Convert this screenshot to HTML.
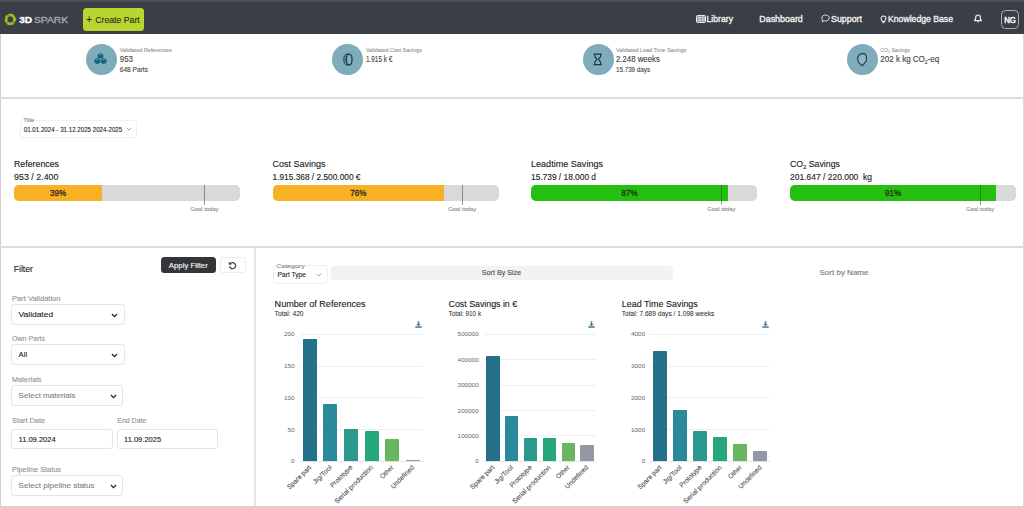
<!DOCTYPE html>
<html lang="en"><head><meta charset="utf-8"><title>3D Spark Dashboard</title>
<style>
html,body{margin:0;padding:0;}
body{width:1024px;height:507px;position:relative;overflow:hidden;background:#fff;font-family:"Liberation Sans", sans-serif;}
body>div,body>svg{position:absolute;box-sizing:border-box;}
svg.tx text{font-family:"Liberation Sans", sans-serif;white-space:pre;stroke-linejoin:round;}
</style></head><body>
<div style="left:0px;top:0px;width:1024px;height:507px;background:#fff;"></div>
<div style="left:0px;top:34px;width:1px;height:473px;background:#cfcfcf;"></div>
<div style="left:1023px;top:34px;width:1px;height:473px;background:#d8d8d8;"></div>
<div style="left:0px;top:97.2px;width:1024px;height:1.9px;background:#dcdcdc;"></div>
<div style="left:0px;top:246.4px;width:1024px;height:2px;background:#dcdcdc;"></div>
<div style="left:254.1px;top:248px;width:2.1px;height:259px;background:#e4e4e4;"></div>
<div style="left:0px;top:505.7px;width:1024px;height:1.3px;background:#d2d2d2;"></div>
<div style="left:0px;top:0px;width:1024px;height:34.4px;background:#3a3f47;"></div>
<div style="left:0px;top:0px;width:1024px;height:2px;background:#4d4d4f;"></div>
<svg style="left:3.1px;top:11.9px" width="15" height="15" viewBox="0 0 15 15">
<path d="M7.2 1.4 L10.6 2.2 L13.6 7.6 L10.4 12.8 L5 13.6 L1.5 9.4 L2.6 3.6 Z" fill="none" stroke="#9fba24" stroke-width="3.5" stroke-linejoin="round" transform="translate(1.8 1.8) scale(0.75)"/>
<path d="M4.2 2.2 L6 4.6 M11.4 10.6 L9.4 9.4 M3 11.4 L4.8 9.4" stroke="#3a3f47" stroke-width="0.7"/>
</svg>
<div style="left:83px;top:8px;width:61px;height:23px;background:#b9d532;border-radius:3.5px;"></div>
<svg style="left:696px;top:15px" width="10" height="8" viewBox="0 0 10 8"><rect x="0.5" y="0.5" width="9" height="7" rx="1" fill="rgba(255,255,255,0.45)" stroke="#eee" stroke-width="1"/><path d="M2 2.5h3M2 4h3M2 5.5h3M6.2 2.3h2v3.4h-2z" stroke="#eee" stroke-width="0.7" fill="none"/></svg>
<svg style="left:821px;top:14px" width="9" height="9" viewBox="0 0 9 9"><path d="M4.5 1 C6.6 1 8.2 2.3 8.2 4 C8.2 5.7 6.6 7 4.5 7 C4 7 3.6 6.9 3.2 6.8 L1.2 7.8 L1.7 6.1 C1.1 5.5 0.8 4.8 0.8 4 C0.8 2.3 2.4 1 4.5 1Z" fill="none" stroke="#eee" stroke-width="0.9"/></svg>
<svg style="left:879.6px;top:14.6px" width="7" height="9.4" viewBox="0 0 8 10"><path d="M4 0.8 C5.8 0.8 6.8 2.1 6.8 3.5 C6.8 4.7 6 5.3 5.6 6.2 L5.4 7 H2.6 L2.4 6.2 C2 5.3 1.2 4.7 1.2 3.5 C1.2 2.1 2.2 0.8 4 0.8Z M2.9 8.4h2.2" fill="none" stroke="#f2f2f2" stroke-width="1.15"/></svg>
<svg style="left:974px;top:14px" width="8" height="10" viewBox="0 0 8 10"><path d="M4 1 C5.7 1 6.3 2.3 6.3 3.6 C6.3 5.3 7 6 7.3 6.6 H0.7 C1 6 1.7 5.3 1.7 3.6 C1.7 2.3 2.3 1 4 1Z" fill="none" stroke="#f2f2f2" stroke-width="1.2"/><path d="M3 7.5 a1 1 0 0 0 2 0Z" fill="#f2f2f2"/></svg>
<div style="left:1000.9px;top:10.2px;width:18.3px;height:18.7px;background:transparent;border:1px solid #aab0b6;border-radius:4.5px;"></div>
<div style="left:86.3px;top:44.1px;width:30.8px;height:30.8px;background:#7eacba;border-radius:50%;"></div>
<div style="left:332.3px;top:44.1px;width:30.8px;height:30.8px;background:#7eacba;border-radius:50%;"></div>
<div style="left:582.8000000000001px;top:44.1px;width:30.8px;height:30.8px;background:#7eacba;border-radius:50%;"></div>
<div style="left:846.8000000000001px;top:44.1px;width:30.8px;height:30.8px;background:#7eacba;border-radius:50%;"></div>
<svg style="left:94px;top:52.8px" width="13" height="11.6" viewBox="0 0 28 25"><g fill="#11627e">
<path d="M14 0 L20 3 V9.5 L14 12.5 L8 9.5 V3Z"/><path d="M7.2 11 L13.2 14 V21 L7.2 24 L1 21 V14Z"/><path d="M20.8 11 L27 14 V21 L20.8 24 L14.8 21 V14Z"/></g>
<g fill="#5fa2b6"><path d="M10.5 3.6 L14 2 L17.5 3.6 L14 5.2Z"/><path d="M3.6 14.6 L7.2 13 L10.6 14.6 L7.2 16.2Z"/><path d="M17.3 14.6 L20.8 13 L24.4 14.6 L20.8 16.2Z"/></g></svg>
<svg style="left:342.8px;top:52.8px" width="10" height="13" viewBox="0 0 10 13"><g fill="none" stroke="#1d3b47" stroke-width="1"><ellipse cx="6.2" cy="6.5" rx="2.8" ry="5.4" stroke-width="1.25" fill="#86b2bf"/><path d="M6.2 1 H3.8 C2 1 0.8 3.4 0.8 6.5 C0.8 9.6 2 12 3.8 12 H6.2" /><path d="M1.4 4.2 H3.4 M0.9 6.5 H3.2 M1.4 8.8 H3.4" stroke-width="0.7"/></g></svg>
<svg style="left:593.2px;top:53.2px" width="9.4" height="12.6" viewBox="0 0 10 13"><g fill="none" stroke="#203844" stroke-width="1.3"><path d="M0.6 0.9 H9.4 M0.6 12.1 H9.4"/><path d="M1.8 0.9 V2.6 C1.8 4.8 4.1 5.6 4.1 6.5 C4.1 7.4 1.8 8.2 1.8 10.4 V12.1 M8.2 0.9 V2.6 C8.2 4.8 5.9 5.6 5.9 6.5 C5.9 7.4 8.2 8.2 8.2 10.4 V12.1"/></g></svg>
<svg style="left:856.5px;top:52.8px" width="10.4" height="13" viewBox="0 0 10.4 13"><path d="M2.1 1.9 L3.6 0.9 L5.3 0.5 L6.6 0.9 L7.9 0.7 L8.7 2.2 L9.5 3.8 L9.3 5.2 L9.7 6.9 L8.8 8.6 L7.3 10.4 L6.5 11.8 L5.3 12.4 L4 11.9 L3.2 10.9 L1.8 9.6 L0.9 7.9 L0.9 6.2 L0.4 4.5 L1.4 3.4Z" fill="#8db6c3" stroke="#1f3b47" stroke-width="1.15" stroke-linejoin="round"/></svg>
<div style="left:19.8px;top:119.5px;width:117.5px;height:18.2px;background:#fff;border:1px solid #f0f0f2;border-radius:3px;"></div>
<div style="left:22.5px;top:117px;width:13px;height:5px;background:#fff;"></div>
<svg style="left:126.2px;top:127.4px" width="6" height="4" viewBox="0 0 6 4"><path d="M0.8 0.8 L3 3 L5.2 0.8" fill="none" stroke="#8a8a8a" stroke-width="0.8"/></svg>
<div style="left:14px;top:184.5px;width:226px;height:16.4px;background:#d9d9d9;border-radius:5px;overflow:hidden;"></div>
<div style="left:14px;top:184.5px;width:88px;height:16.4px;background:#f8b024;border-radius:5px 0 0 5px;"></div>
<div style="left:203.95000000000002px;top:184.5px;width:0.9px;height:20.5px;background:rgba(60,60,60,0.5);"></div>
<div style="left:272.5px;top:184.5px;width:226px;height:16.4px;background:#d9d9d9;border-radius:5px;overflow:hidden;"></div>
<div style="left:272.5px;top:184.5px;width:171.5px;height:16.4px;background:#f8b024;border-radius:5px 0 0 5px;"></div>
<div style="left:461.55px;top:184.5px;width:0.9px;height:20.5px;background:rgba(60,60,60,0.5);"></div>
<div style="left:531px;top:184.5px;width:226px;height:16.4px;background:#d9d9d9;border-radius:5px;overflow:hidden;"></div>
<div style="left:531px;top:184.5px;width:197px;height:16.4px;background:#23c010;border-radius:5px 0 0 5px;"></div>
<div style="left:720.9499999999999px;top:184.5px;width:0.9px;height:20.5px;background:rgba(60,60,60,0.5);"></div>
<div style="left:790px;top:184.5px;width:226px;height:16.4px;background:#d9d9d9;border-radius:5px;overflow:hidden;"></div>
<div style="left:790px;top:184.5px;width:206px;height:16.4px;background:#23c010;border-radius:5px 0 0 5px;"></div>
<div style="left:979.55px;top:184.5px;width:0.9px;height:20.5px;background:rgba(60,60,60,0.5);"></div>
<div style="left:161px;top:257px;width:55.2px;height:16.3px;background:#333539;border-radius:3.5px;"></div>
<div style="left:220.3px;top:257px;width:25.4px;height:16.3px;background:#fff;border:1px solid #ececef;border-radius:3px;"></div>
<svg style="left:227.6px;top:260.6px" width="9" height="9" viewBox="0 0 9 9"><path d="M2.2 2.6 A3.1 3.1 0 1 1 1.5 5.2" fill="none" stroke="#3c3c3c" stroke-width="1.2"/><path d="M0.6 0.8 L1 4 L4 3.3Z" fill="#3c3c3c"/></svg>
<div style="left:11.4px;top:304.0px;width:113.5px;height:20.5px;background:#fff;border:1px solid #e4e5e9;border-radius:3px;"></div>
<svg style="left:111.4px;top:312.59999999999997px" width="7" height="5" viewBox="0 0 7 5"><path d="M0.9 1 L3.5 3.6 L6.1 1" fill="none" stroke="#222" stroke-width="1.15"/></svg>
<div style="left:11.4px;top:344.2px;width:113.5px;height:20.5px;background:#fff;border:1px solid #e4e5e9;border-radius:3px;"></div>
<svg style="left:111.4px;top:352.79999999999995px" width="7" height="5" viewBox="0 0 7 5"><path d="M0.9 1 L3.5 3.6 L6.1 1" fill="none" stroke="#222" stroke-width="1.15"/></svg>
<div style="left:11.4px;top:385.1px;width:112px;height:20.5px;background:#fff;border:1px solid #e4e5e9;border-radius:3px;"></div>
<svg style="left:109.9px;top:393.7px" width="7" height="5" viewBox="0 0 7 5"><path d="M0.9 1 L3.5 3.6 L6.1 1" fill="none" stroke="#222" stroke-width="1.15"/></svg>
<div style="left:11.4px;top:429.3px;width:101.6px;height:20.2px;background:#fff;border:1px solid #e4e5e9;border-radius:3px;"></div>
<div style="left:116.8px;top:429.3px;width:101.2px;height:20.2px;background:#fff;border:1px solid #e4e5e9;border-radius:3px;"></div>
<div style="left:11.4px;top:475.0px;width:112px;height:20.5px;background:#fff;border:1px solid #e4e5e9;border-radius:3px;"></div>
<svg style="left:109.9px;top:483.59999999999997px" width="7" height="5" viewBox="0 0 7 5"><path d="M0.9 1 L3.5 3.6 L6.1 1" fill="none" stroke="#222" stroke-width="1.15"/></svg>
<div style="left:272.8px;top:264.6px;width:54.8px;height:19px;background:#fff;border:1px solid #f0f0f2;border-radius:3px;"></div>
<div style="left:275px;top:262px;width:30px;height:6px;background:#fff;"></div>
<svg style="left:315.8px;top:272.6px" width="6" height="4" viewBox="0 0 6 4"><path d="M0.8 0.8 L3 3 L5.2 0.8" fill="none" stroke="#999" stroke-width="0.8"/></svg>
<div style="left:331px;top:265.6px;width:342px;height:14.6px;background:#f1f2f3;border-radius:4px;"></div>
<svg style="left:415.1px;top:320.5px" width="7" height="7" viewBox="0 0 7 7"><path d="M2.7 0.3h1.6v2.6h1.5L3.5 5.2 1.2 2.9h1.5z" fill="#4c7f93"/><path d="M0.3 5.2h6.4v1.6H0.3z" fill="#4c7f93"/></svg>
<div style="left:300px;top:460.75px;width:123px;height:0.6px;background:#e4e4e4;"></div>
<div style="left:300px;top:429.0px;width:123px;height:0.6px;background:#efefef;"></div>
<div style="left:300px;top:397.25px;width:123px;height:0.6px;background:#efefef;"></div>
<div style="left:300px;top:365.5px;width:123px;height:0.6px;background:#efefef;"></div>
<div style="left:300px;top:333.75px;width:123px;height:0.6px;background:#efefef;"></div>
<div style="left:302.8px;top:338.6px;width:14.1px;height:122.39999999999998px;background:#26718a;border-radius:0.8px 0.8px 0 0;"></div>
<div style="left:323.40000000000003px;top:404px;width:14.1px;height:57px;background:#2a8a9b;border-radius:0.8px 0.8px 0 0;"></div>
<div style="left:344.0px;top:429px;width:14.1px;height:32px;background:#2a9a8f;border-radius:0.8px 0.8px 0 0;"></div>
<div style="left:364.6px;top:431px;width:14.1px;height:30px;background:#26a67b;border-radius:0.8px 0.8px 0 0;"></div>
<div style="left:385.20000000000005px;top:438.8px;width:14.1px;height:22.19999999999999px;background:#68b65f;border-radius:0.8px 0.8px 0 0;"></div>
<div style="left:405.8px;top:460.2px;width:14.1px;height:0.8000000000000114px;background:#9298a4;border-radius:0.8px 0.8px 0 0;"></div>
<svg style="left:587.5px;top:320.5px" width="7" height="7" viewBox="0 0 7 7"><path d="M2.7 0.3h1.6v2.6h1.5L3.5 5.2 1.2 2.9h1.5z" fill="#4c7f93"/><path d="M0.3 5.2h6.4v1.6H0.3z" fill="#4c7f93"/></svg>
<div style="left:483.7px;top:460.75px;width:112.80000000000001px;height:0.6px;background:#e4e4e4;"></div>
<div style="left:483.7px;top:435.35px;width:112.80000000000001px;height:0.6px;background:#efefef;"></div>
<div style="left:483.7px;top:409.95px;width:112.80000000000001px;height:0.6px;background:#efefef;"></div>
<div style="left:483.7px;top:384.55px;width:112.80000000000001px;height:0.6px;background:#efefef;"></div>
<div style="left:483.7px;top:359.15px;width:112.80000000000001px;height:0.6px;background:#efefef;"></div>
<div style="left:483.7px;top:333.75px;width:112.80000000000001px;height:0.6px;background:#efefef;"></div>
<div style="left:486.3px;top:356.1px;width:13.3px;height:104.89999999999998px;background:#26718a;border-radius:0.8px 0.8px 0 0;"></div>
<div style="left:505.1px;top:416.2px;width:13.3px;height:44.80000000000001px;background:#2a8a9b;border-radius:0.8px 0.8px 0 0;"></div>
<div style="left:523.9px;top:438px;width:13.3px;height:23px;background:#2a9a8f;border-radius:0.8px 0.8px 0 0;"></div>
<div style="left:542.7px;top:438.3px;width:13.3px;height:22.69999999999999px;background:#26a67b;border-radius:0.8px 0.8px 0 0;"></div>
<div style="left:561.5px;top:442.8px;width:13.3px;height:18.19999999999999px;background:#68b65f;border-radius:0.8px 0.8px 0 0;"></div>
<div style="left:580.3px;top:444.6px;width:13.3px;height:16.399999999999977px;background:#9298a4;border-radius:0.8px 0.8px 0 0;"></div>
<svg style="left:762.1px;top:320.5px" width="7" height="7" viewBox="0 0 7 7"><path d="M2.7 0.3h1.6v2.6h1.5L3.5 5.2 1.2 2.9h1.5z" fill="#4c7f93"/><path d="M0.3 5.2h6.4v1.6H0.3z" fill="#4c7f93"/></svg>
<div style="left:650px;top:460.75px;width:120px;height:0.6px;background:#e4e4e4;"></div>
<div style="left:650px;top:429.0px;width:120px;height:0.6px;background:#efefef;"></div>
<div style="left:650px;top:397.25px;width:120px;height:0.6px;background:#efefef;"></div>
<div style="left:650px;top:365.5px;width:120px;height:0.6px;background:#efefef;"></div>
<div style="left:650px;top:333.75px;width:120px;height:0.6px;background:#efefef;"></div>
<div style="left:653.4px;top:351.3px;width:14px;height:109.69999999999999px;background:#26718a;border-radius:0.8px 0.8px 0 0;"></div>
<div style="left:673.4px;top:410.4px;width:14px;height:50.60000000000002px;background:#2a8a9b;border-radius:0.8px 0.8px 0 0;"></div>
<div style="left:693.4px;top:431px;width:14px;height:30px;background:#2a9a8f;border-radius:0.8px 0.8px 0 0;"></div>
<div style="left:713.4px;top:436.5px;width:14px;height:24.5px;background:#26a67b;border-radius:0.8px 0.8px 0 0;"></div>
<div style="left:733.4px;top:443.5px;width:14px;height:17.5px;background:#68b65f;border-radius:0.8px 0.8px 0 0;"></div>
<div style="left:753.4px;top:451px;width:14px;height:10px;background:#9298a4;border-radius:0.8px 0.8px 0 0;"></div>
<svg class="tx" style="left:0;top:0" width="1024" height="507" viewBox="0 0 1024 507">
<text font-size="9.3" fill="#fff" stroke="#fff" stroke-width="0.300" font-weight="700" textLength="13" lengthAdjust="spacingAndGlyphs" x="19.20" y="23.05">3D</text>
<text font-size="9.3" fill="#a4a9af" stroke="#a4a9af" stroke-width="0.350" textLength="34.2" lengthAdjust="spacingAndGlyphs" x="33.90" y="23.05">SPARK</text>
<text font-size="10.5" fill="#262b1a" stroke="#262b1a" stroke-width="0.147" textLength="5.8" lengthAdjust="spacingAndGlyphs" x="86.30" y="23.08">+</text>
<text font-size="8.6" fill="#262b1a" stroke="#262b1a" stroke-width="0.120" textLength="44.4" lengthAdjust="spacingAndGlyphs" x="95.30" y="22.60">Create Part</text>
<text font-size="8.8" fill="#f4f4f4" stroke="#f4f4f4" stroke-width="0.320" textLength="26.5" lengthAdjust="spacingAndGlyphs" x="706.50" y="22.27">Library</text>
<text font-size="8.8" fill="#f4f4f4" stroke="#f4f4f4" stroke-width="0.320" textLength="43.5" lengthAdjust="spacingAndGlyphs" x="759.30" y="22.27">Dashboard</text>
<text font-size="8.8" fill="#f4f4f4" stroke="#f4f4f4" stroke-width="0.320" textLength="31" lengthAdjust="spacingAndGlyphs" x="831.00" y="22.27">Support</text>
<text font-size="8.8" fill="#f4f4f4" stroke="#f4f4f4" stroke-width="0.320" textLength="65" lengthAdjust="spacingAndGlyphs" x="888.00" y="22.27">Knowledge Base</text>
<text font-size="8.8" fill="#fff" stroke="#fff" stroke-width="0.450" textLength="11.8" lengthAdjust="spacingAndGlyphs" text-anchor="middle" x="1010.10" y="22.67">NG</text>
<text font-size="4.9" fill="#8d8d8d" stroke="#8d8d8d" stroke-width="0.069" textLength="52" lengthAdjust="spacingAndGlyphs" x="119.80" y="51.96">Validated References</text>
<text font-size="8.3" fill="#404040" stroke="#404040" stroke-width="0.116" textLength="13" lengthAdjust="spacingAndGlyphs" x="119.80" y="62.39">953</text>
<text font-size="6.3" fill="#404040" stroke="#404040" stroke-width="0.088" textLength="28.2" lengthAdjust="spacingAndGlyphs" x="119.80" y="71.67">648 Parts</text>
<text font-size="4.9" fill="#8d8d8d" stroke="#8d8d8d" stroke-width="0.069" textLength="56" lengthAdjust="spacingAndGlyphs" x="366.00" y="51.96">Validated Cost Savings</text>
<text font-size="8.3" fill="#404040" stroke="#404040" stroke-width="0.116" textLength="26.2" lengthAdjust="spacingAndGlyphs" x="366.00" y="62.39">1.915 k €</text>
<text font-size="4.9" fill="#8d8d8d" stroke="#8d8d8d" stroke-width="0.069" textLength="70.3" lengthAdjust="spacingAndGlyphs" x="616.00" y="51.96">Validated Lead Time Savings</text>
<text font-size="8.3" fill="#404040" stroke="#404040" stroke-width="0.116" textLength="43.8" lengthAdjust="spacingAndGlyphs" x="616.00" y="62.39">2.248 weeks</text>
<text font-size="6.3" fill="#404040" stroke="#404040" stroke-width="0.088" textLength="34" lengthAdjust="spacingAndGlyphs" x="616.00" y="71.67">15.739 days</text>
<text font-size="4.9" fill="#8d8d8d" stroke="#8d8d8d" stroke-width="0.069" textLength="29.7" lengthAdjust="spacingAndGlyphs" x="880.30" y="51.96">CO<tspan dy="1.08" font-size="3.04">2</tspan><tspan dy="-1.08">&#8203;</tspan> Savings</text>
<text font-size="8.3" fill="#404040" stroke="#404040" stroke-width="0.116" textLength="58.9" lengthAdjust="spacingAndGlyphs" x="880.30" y="62.39">202 k kg CO<tspan dy="1.83" font-size="5.15">2</tspan><tspan dy="-1.83">&#8203;</tspan>-eq</text>
<text font-size="5.8" fill="#7a8390" stroke="#7a8390" stroke-width="0.081" textLength="11.2" lengthAdjust="spacingAndGlyphs" x="23.30" y="122.39">Title</text>
<text font-size="6.8" fill="#222" stroke="#222" stroke-width="0.095" textLength="98.4" lengthAdjust="spacingAndGlyphs" x="23.80" y="132.05">01.01.2024 - 31.12.2025 2024-2025</text>
<text font-size="9" fill="#222" stroke="#222" stroke-width="0.126" textLength="45" lengthAdjust="spacingAndGlyphs" x="14.00" y="167.04">References</text>
<text font-size="8.4" fill="#222" stroke="#222" stroke-width="0.118" textLength="44.5" lengthAdjust="spacingAndGlyphs" x="14.00" y="180.32">953 / 2.400</text>
<text font-size="8.2" fill="#2a2a1a" stroke="#2a2a1a" stroke-width="0.280" textLength="16" lengthAdjust="spacingAndGlyphs" text-anchor="middle" x="58.00" y="195.65">39%</text>
<text font-size="5.2" fill="#8a8a8a" stroke="#8a8a8a" stroke-width="0.073" textLength="28.2" lengthAdjust="spacingAndGlyphs" text-anchor="middle" x="204.40" y="211.07">Goal today</text>
<text font-size="9" fill="#222" stroke="#222" stroke-width="0.126" textLength="53" lengthAdjust="spacingAndGlyphs" x="272.50" y="167.04">Cost Savings</text>
<text font-size="8.4" fill="#222" stroke="#222" stroke-width="0.118" textLength="88" lengthAdjust="spacingAndGlyphs" x="272.50" y="180.32">1.915.368 / 2.500.000 €</text>
<text font-size="8.2" fill="#2a2a1a" stroke="#2a2a1a" stroke-width="0.280" textLength="16" lengthAdjust="spacingAndGlyphs" text-anchor="middle" x="358.25" y="195.65">76%</text>
<text font-size="5.2" fill="#8a8a8a" stroke="#8a8a8a" stroke-width="0.073" textLength="28.2" lengthAdjust="spacingAndGlyphs" text-anchor="middle" x="462.00" y="211.07">Goal today</text>
<text font-size="9" fill="#222" stroke="#222" stroke-width="0.126" textLength="72" lengthAdjust="spacingAndGlyphs" x="531.00" y="167.04">Leadtime Savings</text>
<text font-size="8.4" fill="#222" stroke="#222" stroke-width="0.118" textLength="65" lengthAdjust="spacingAndGlyphs" x="531.00" y="180.32">15.739 / 18.000 d</text>
<text font-size="8.2" fill="#2a2a1a" stroke="#2a2a1a" stroke-width="0.280" textLength="16" lengthAdjust="spacingAndGlyphs" text-anchor="middle" x="629.50" y="195.65">87%</text>
<text font-size="5.2" fill="#8a8a8a" stroke="#8a8a8a" stroke-width="0.073" textLength="28.2" lengthAdjust="spacingAndGlyphs" text-anchor="middle" x="721.40" y="211.07">Goal today</text>
<text font-size="9" fill="#222" stroke="#222" stroke-width="0.126" textLength="50" lengthAdjust="spacingAndGlyphs" x="790.00" y="167.04">CO<tspan dy="1.98" font-size="5.58">2</tspan><tspan dy="-1.98">&#8203;</tspan> Savings</text>
<text font-size="8.4" fill="#222" stroke="#222" stroke-width="0.118" textLength="82" lengthAdjust="spacingAndGlyphs" x="790.00" y="180.32">201.647 / 220.000&nbsp; kg</text>
<text font-size="8.2" fill="#2a2a1a" stroke="#2a2a1a" stroke-width="0.280" textLength="16" lengthAdjust="spacingAndGlyphs" text-anchor="middle" x="893.00" y="195.65">91%</text>
<text font-size="5.2" fill="#8a8a8a" stroke="#8a8a8a" stroke-width="0.073" textLength="28.2" lengthAdjust="spacingAndGlyphs" text-anchor="middle" x="980.00" y="211.07">Goal today</text>
<text font-size="8.8" fill="#222" stroke="#222" stroke-width="0.123" textLength="19.2" lengthAdjust="spacingAndGlyphs" x="13.70" y="271.77">Filter</text>
<text font-size="7.7" fill="#fff" stroke="#fff" stroke-width="0.108" textLength="39" lengthAdjust="spacingAndGlyphs" text-anchor="middle" x="188.30" y="267.87">Apply Filter</text>
<text font-size="6.9" fill="#8a8f98" stroke="#8a8f98" stroke-width="0.097" textLength="48.5" lengthAdjust="spacingAndGlyphs" x="12.00" y="301.08">Part Validation</text>
<text font-size="7.7" fill="#222" stroke="#222" stroke-width="0.108" textLength="34.5" lengthAdjust="spacingAndGlyphs" x="18.60" y="316.57">Validated</text>
<text font-size="6.9" fill="#8a8f98" stroke="#8a8f98" stroke-width="0.097" textLength="33" lengthAdjust="spacingAndGlyphs" x="12.00" y="341.28">Own Parts</text>
<text font-size="7.7" fill="#222" stroke="#222" stroke-width="0.108" textLength="8.5" lengthAdjust="spacingAndGlyphs" x="18.60" y="356.77">All</text>
<text font-size="6.9" fill="#8a8f98" stroke="#8a8f98" stroke-width="0.097" textLength="29.5" lengthAdjust="spacingAndGlyphs" x="12.00" y="382.18">Materials</text>
<text font-size="7.7" fill="#7d828a" stroke="#7d828a" stroke-width="0.108" textLength="57" lengthAdjust="spacingAndGlyphs" x="18.60" y="397.67">Select materials</text>
<text font-size="6.9" fill="#8a8f98" stroke="#8a8f98" stroke-width="0.097" textLength="33" lengthAdjust="spacingAndGlyphs" x="12.00" y="423.18">Start Date</text>
<text font-size="6.9" fill="#8a8f98" stroke="#8a8f98" stroke-width="0.097" textLength="29" lengthAdjust="spacingAndGlyphs" x="117.30" y="423.18">End Date</text>
<text font-size="7.6" fill="#222" stroke="#222" stroke-width="0.106" textLength="37.2" lengthAdjust="spacingAndGlyphs" x="18.50" y="441.94">11.09.2024</text>
<text font-size="7.6" fill="#222" stroke="#222" stroke-width="0.106" textLength="37.2" lengthAdjust="spacingAndGlyphs" x="124.00" y="441.94">11.09.2025</text>
<text font-size="6.9" fill="#8a8f98" stroke="#8a8f98" stroke-width="0.097" textLength="49" lengthAdjust="spacingAndGlyphs" x="12.00" y="472.08">Pipeline Status</text>
<text font-size="7.7" fill="#7d828a" stroke="#7d828a" stroke-width="0.108" textLength="76" lengthAdjust="spacingAndGlyphs" x="18.60" y="487.57">Select pipeline status</text>
<text font-size="6.0" fill="#7a8390" stroke="#7a8390" stroke-width="0.084" textLength="28.5" lengthAdjust="spacingAndGlyphs" x="276.20" y="268.06">Category</text>
<text font-size="6.6" fill="#222" stroke="#222" stroke-width="0.092" textLength="28.3" lengthAdjust="spacingAndGlyphs" x="277.60" y="276.98">Part Type</text>
<text font-size="6.8" fill="#444" stroke="#444" stroke-width="0.095" textLength="39.5" lengthAdjust="spacingAndGlyphs" text-anchor="middle" x="501.50" y="275.45">Sort By Size</text>
<text font-size="6.8" fill="#777" stroke="#777" stroke-width="0.095" textLength="49" lengthAdjust="spacingAndGlyphs" text-anchor="middle" x="844.00" y="275.45">Sort by Name</text>
<text font-size="8.8" fill="#222" stroke="#222" stroke-width="0.123" textLength="91" lengthAdjust="spacingAndGlyphs" x="274.60" y="307.37">Number of References</text>
<text font-size="6.6" fill="#2a2a2a" stroke="#2a2a2a" stroke-width="0.040" textLength="29" lengthAdjust="spacingAndGlyphs" x="274.60" y="315.68">Total: 420</text>
<text font-size="6.1" fill="#6a6a6a" stroke="#6a6a6a" stroke-width="0.020" textLength="3.55" lengthAdjust="spacingAndGlyphs" text-anchor="end" x="294.60" y="463.30">0</text>
<text font-size="6.1" fill="#6a6a6a" stroke="#6a6a6a" stroke-width="0.020" textLength="7.1" lengthAdjust="spacingAndGlyphs" text-anchor="end" x="294.60" y="431.55">50</text>
<text font-size="6.1" fill="#6a6a6a" stroke="#6a6a6a" stroke-width="0.020" textLength="10.649999999999999" lengthAdjust="spacingAndGlyphs" text-anchor="end" x="294.60" y="399.80">100</text>
<text font-size="6.1" fill="#6a6a6a" stroke="#6a6a6a" stroke-width="0.020" textLength="10.649999999999999" lengthAdjust="spacingAndGlyphs" text-anchor="end" x="294.60" y="368.05">150</text>
<text font-size="6.1" fill="#6a6a6a" stroke="#6a6a6a" stroke-width="0.020" textLength="10.649999999999999" lengthAdjust="spacingAndGlyphs" text-anchor="end" x="294.60" y="336.30">200</text>
<text font-size="6.8" fill="#505050" stroke="#505050" stroke-width="0.095" textLength="31" lengthAdjust="spacingAndGlyphs" text-anchor="end" transform="rotate(-45 311.65 467.95)" x="311.65" y="467.95">Spare part</text>
<text font-size="6.8" fill="#505050" stroke="#505050" stroke-width="0.095" textLength="23.5" lengthAdjust="spacingAndGlyphs" text-anchor="end" transform="rotate(-45 332.25 467.95)" x="332.25" y="467.95">Jig/Tool</text>
<text font-size="6.8" fill="#505050" stroke="#505050" stroke-width="0.095" textLength="28.5" lengthAdjust="spacingAndGlyphs" text-anchor="end" transform="rotate(-45 352.85 467.95)" x="352.85" y="467.95">Prototype</text>
<text font-size="6.8" fill="#505050" stroke="#505050" stroke-width="0.095" textLength="51" lengthAdjust="spacingAndGlyphs" text-anchor="end" transform="rotate(-45 373.45 467.95)" x="373.45" y="467.95">Serial production</text>
<text font-size="6.8" fill="#505050" stroke="#505050" stroke-width="0.095" textLength="16" lengthAdjust="spacingAndGlyphs" text-anchor="end" transform="rotate(-45 394.05 467.95)" x="394.05" y="467.95">Other</text>
<text font-size="6.8" fill="#505050" stroke="#505050" stroke-width="0.095" textLength="30" lengthAdjust="spacingAndGlyphs" text-anchor="end" transform="rotate(-45 414.65 467.95)" x="414.65" y="467.95">Undefined</text>
<text font-size="8.8" fill="#222" stroke="#222" stroke-width="0.123" textLength="68.5" lengthAdjust="spacingAndGlyphs" x="448.60" y="307.37">Cost Savings in €</text>
<text font-size="6.6" fill="#2a2a2a" stroke="#2a2a2a" stroke-width="0.040" textLength="32.5" lengthAdjust="spacingAndGlyphs" x="448.60" y="315.68">Total: 910 k</text>
<text font-size="6.1" fill="#6a6a6a" stroke="#6a6a6a" stroke-width="0.020" textLength="3.55" lengthAdjust="spacingAndGlyphs" text-anchor="end" x="478.90" y="463.30">0</text>
<text font-size="6.1" fill="#6a6a6a" stroke="#6a6a6a" stroke-width="0.020" textLength="21.299999999999997" lengthAdjust="spacingAndGlyphs" text-anchor="end" x="478.90" y="437.90">100000</text>
<text font-size="6.1" fill="#6a6a6a" stroke="#6a6a6a" stroke-width="0.020" textLength="21.299999999999997" lengthAdjust="spacingAndGlyphs" text-anchor="end" x="478.90" y="412.50">200000</text>
<text font-size="6.1" fill="#6a6a6a" stroke="#6a6a6a" stroke-width="0.020" textLength="21.299999999999997" lengthAdjust="spacingAndGlyphs" text-anchor="end" x="478.90" y="387.10">300000</text>
<text font-size="6.1" fill="#6a6a6a" stroke="#6a6a6a" stroke-width="0.020" textLength="21.299999999999997" lengthAdjust="spacingAndGlyphs" text-anchor="end" x="478.90" y="361.70">400000</text>
<text font-size="6.1" fill="#6a6a6a" stroke="#6a6a6a" stroke-width="0.020" textLength="21.299999999999997" lengthAdjust="spacingAndGlyphs" text-anchor="end" x="478.90" y="336.30">500000</text>
<text font-size="6.8" fill="#505050" stroke="#505050" stroke-width="0.095" textLength="31" lengthAdjust="spacingAndGlyphs" text-anchor="end" transform="rotate(-45 494.75 467.95)" x="494.75" y="467.95">Spare part</text>
<text font-size="6.8" fill="#505050" stroke="#505050" stroke-width="0.095" textLength="23.5" lengthAdjust="spacingAndGlyphs" text-anchor="end" transform="rotate(-45 513.55 467.95)" x="513.55" y="467.95">Jig/Tool</text>
<text font-size="6.8" fill="#505050" stroke="#505050" stroke-width="0.095" textLength="28.5" lengthAdjust="spacingAndGlyphs" text-anchor="end" transform="rotate(-45 532.35 467.95)" x="532.35" y="467.95">Prototype</text>
<text font-size="6.8" fill="#505050" stroke="#505050" stroke-width="0.095" textLength="51" lengthAdjust="spacingAndGlyphs" text-anchor="end" transform="rotate(-45 551.15 467.95)" x="551.15" y="467.95">Serial production</text>
<text font-size="6.8" fill="#505050" stroke="#505050" stroke-width="0.095" textLength="16" lengthAdjust="spacingAndGlyphs" text-anchor="end" transform="rotate(-45 569.95 467.95)" x="569.95" y="467.95">Other</text>
<text font-size="6.8" fill="#505050" stroke="#505050" stroke-width="0.095" textLength="30" lengthAdjust="spacingAndGlyphs" text-anchor="end" transform="rotate(-45 588.75 467.95)" x="588.75" y="467.95">Undefined</text>
<text font-size="8.8" fill="#222" stroke="#222" stroke-width="0.123" textLength="76" lengthAdjust="spacingAndGlyphs" x="621.80" y="307.37">Lead Time Savings</text>
<text font-size="6.6" fill="#2a2a2a" stroke="#2a2a2a" stroke-width="0.040" textLength="92.5" lengthAdjust="spacingAndGlyphs" x="621.80" y="315.68">Total: 7.689 days / 1.098 weeks</text>
<text font-size="6.1" fill="#6a6a6a" stroke="#6a6a6a" stroke-width="0.020" textLength="3.55" lengthAdjust="spacingAndGlyphs" text-anchor="end" x="645.20" y="463.30">0</text>
<text font-size="6.1" fill="#6a6a6a" stroke="#6a6a6a" stroke-width="0.020" textLength="14.2" lengthAdjust="spacingAndGlyphs" text-anchor="end" x="645.20" y="431.55">1000</text>
<text font-size="6.1" fill="#6a6a6a" stroke="#6a6a6a" stroke-width="0.020" textLength="14.2" lengthAdjust="spacingAndGlyphs" text-anchor="end" x="645.20" y="399.80">2000</text>
<text font-size="6.1" fill="#6a6a6a" stroke="#6a6a6a" stroke-width="0.020" textLength="14.2" lengthAdjust="spacingAndGlyphs" text-anchor="end" x="645.20" y="368.05">3000</text>
<text font-size="6.1" fill="#6a6a6a" stroke="#6a6a6a" stroke-width="0.020" textLength="14.2" lengthAdjust="spacingAndGlyphs" text-anchor="end" x="645.20" y="336.30">4000</text>
<text font-size="6.8" fill="#505050" stroke="#505050" stroke-width="0.095" textLength="31" lengthAdjust="spacingAndGlyphs" text-anchor="end" transform="rotate(-45 662.20 467.95)" x="662.20" y="467.95">Spare part</text>
<text font-size="6.8" fill="#505050" stroke="#505050" stroke-width="0.095" textLength="23.5" lengthAdjust="spacingAndGlyphs" text-anchor="end" transform="rotate(-45 682.20 467.95)" x="682.20" y="467.95">Jig/Tool</text>
<text font-size="6.8" fill="#505050" stroke="#505050" stroke-width="0.095" textLength="28.5" lengthAdjust="spacingAndGlyphs" text-anchor="end" transform="rotate(-45 702.20 467.95)" x="702.20" y="467.95">Prototype</text>
<text font-size="6.8" fill="#505050" stroke="#505050" stroke-width="0.095" textLength="51" lengthAdjust="spacingAndGlyphs" text-anchor="end" transform="rotate(-45 722.20 467.95)" x="722.20" y="467.95">Serial production</text>
<text font-size="6.8" fill="#505050" stroke="#505050" stroke-width="0.095" textLength="16" lengthAdjust="spacingAndGlyphs" text-anchor="end" transform="rotate(-45 742.20 467.95)" x="742.20" y="467.95">Other</text>
<text font-size="6.8" fill="#505050" stroke="#505050" stroke-width="0.095" textLength="30" lengthAdjust="spacingAndGlyphs" text-anchor="end" transform="rotate(-45 762.20 467.95)" x="762.20" y="467.95">Undefined</text>
</svg>
</body></html>
